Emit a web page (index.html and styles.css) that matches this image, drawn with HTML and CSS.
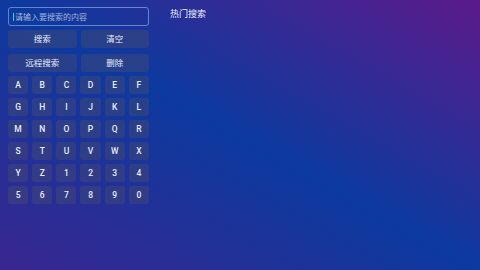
FILE: index.html
```html
<!DOCTYPE html>
<html lang="zh-CN">
<head>
    <meta charset="UTF-8">
    <meta name="viewport" content="width=device-width, initial-scale=1.0">
    <title>搜索</title>
    <link rel="stylesheet" href="styles.css">
</head>
<body>
    <div class="page">
        <div class="left">
            <div class="search-box">
                <span class="caret"></span>
                <span class="placeholder">请输入要搜索的内容</span>
            </div>
            <div class="actions">
                <div class="btn">搜索</div>
                <div class="btn">清空</div>
            </div>
            <div class="actions second">
                <div class="btn">远程搜索</div>
                <div class="btn">删除</div>
            </div>
            <div class="keys">
                <div class="key">A</div><div class="key">B</div><div class="key">C</div>
                <div class="key">D</div><div class="key">E</div><div class="key">F</div>
                <div class="key">G</div><div class="key">H</div><div class="key">I</div>
                <div class="key">J</div><div class="key">K</div><div class="key">L</div>
                <div class="key">M</div><div class="key">N</div><div class="key">O</div>
                <div class="key">P</div><div class="key">Q</div><div class="key">R</div>
                <div class="key">S</div><div class="key">T</div><div class="key">U</div>
                <div class="key">V</div><div class="key">W</div><div class="key">X</div>
                <div class="key">Y</div><div class="key">Z</div><div class="key">1</div>
                <div class="key">2</div><div class="key">3</div><div class="key">4</div>
                <div class="key">5</div><div class="key">6</div><div class="key">7</div>
                <div class="key">8</div><div class="key">9</div><div class="key">0</div>
            </div>
        </div>
        <div class="right">
            <h3 class="hot-title">热门搜索</h3>
        </div>
    </div>
</body>
</html>
```
FILE: styles.css
```css
html, body { margin: 0; height: 100%; }
body { font-family: Roboto, "Noto Sans CJK SC", sans-serif; color: #e8ecf8; background: linear-gradient(to top right, #3a2690 0%, #0c3a9f 50%, #5c1a8a 100%); overflow: hidden; }
.page { display: flex; padding: 7px 8px; gap: 21px; }
.left { width: 141px; display: flex; flex-direction: column; }
.search-box { height: 17px; border: 1px solid #6484cc; border-radius: 3px; display: flex; align-items: center; padding-left: 4px; }
.caret { width: 1px; height: 8px; background: #2ee0e0; margin-right: 1px; }
.placeholder { font-size: 8px; color: #a9b4d6; }
.actions { display: grid; grid-template-columns: 1fr 1fr; gap: 4px; margin-top: 4px; }
.actions.second { margin-top: 6px; }
.btn { height: 18px; line-height: 18px; text-align: center; font-size: 8.5px; border-radius: 3px; background: rgba(72, 76, 112, 0.45); }
.keys { display: grid; grid-template-columns: repeat(6, 1fr); column-gap: 4px; row-gap: 4px; margin-top: 4px; }
.key { height: 18px; line-height: 18px; text-align: center; font-size: 8.5px; font-weight: 500; border-radius: 3px; background: rgba(72, 76, 112, 0.45); }
.right { flex: 1; }
.hot-title { margin: 0; font-size: 9px; font-weight: normal; color: #eef0fa; }
```
